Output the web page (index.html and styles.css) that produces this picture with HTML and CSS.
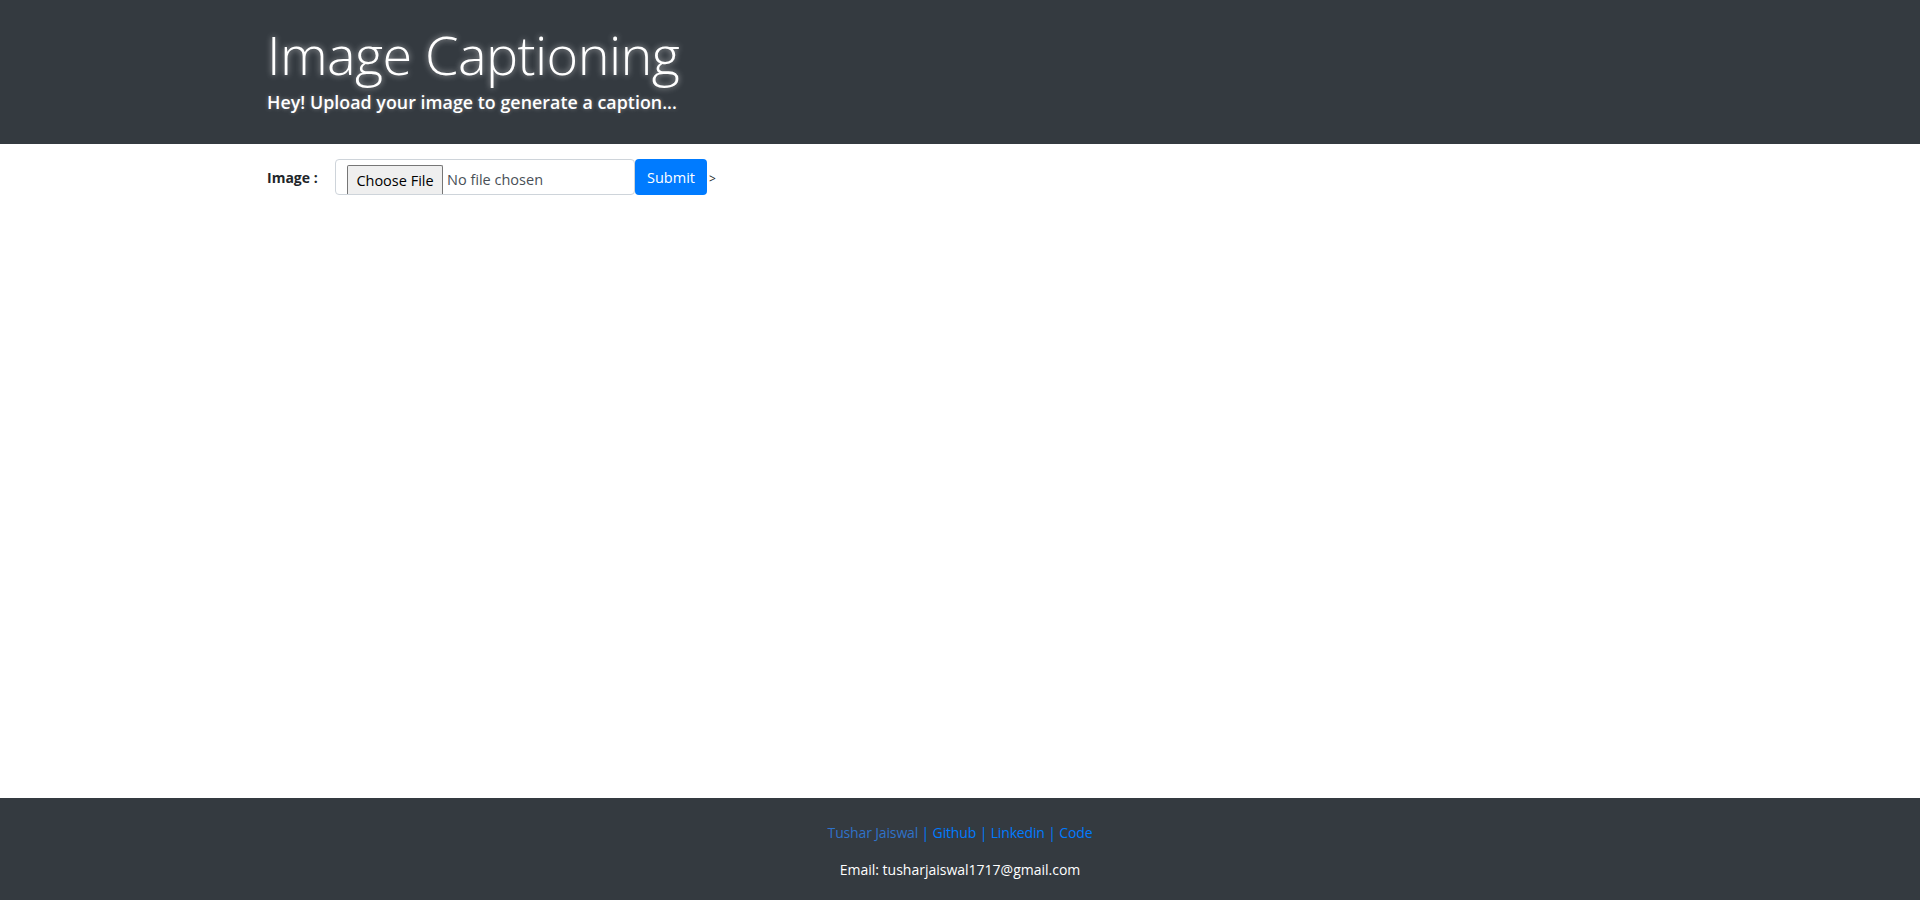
FILE: index.html
```html
<!DOCTYPE html>
<html lang="en">
<head>
<meta charset="utf-8">
<title>Image Captioning</title>
<link rel="stylesheet" href="styles.css">
</head>
<body>
<div class="page">
  <header class="masthead">
    <h1 class="title">Image Captioning</h1>
    <p class="subtitle">Hey! Upload your image to generate a caption...</p>
  </header>
  <main class="content">
    <form class="upload-form">
      <label class="field-label">Image :</label>
      <div class="file-box">
        <span class="file-btn">Choose File</span>
        <span class="file-name">No file chosen</span>
      </div>
      <button type="button" class="submit-btn">Submit</button>
      <span class="gt">&gt;</span>
    </form>
  </main>
  <footer class="site-footer">
    <p class="links"><a class="author">Tushar Jaiswal</a> | <a>Github</a> | <a>Linkedin</a> | <a>Code</a></p>
    <p class="email">Email: tusharjaiswal1717@gmail.com</p>
  </footer>
</div>
</body>
</html>
```
FILE: styles.css
```css
html, body {
  margin: 0;
  padding: 0;
  height: 100%;
}
body {
  font-family: "Open Sans", "Noto Sans", sans-serif;
  color: #212529;
  background: #fff;
}
.page {
  display: flex;
  flex-direction: column;
  height: 900px;
}
.masthead {
  background: #343a40;
  height: 144px;
  box-sizing: border-box;
  padding: 22px 0 0 267px;
  color: #fff;
}
.title {
  margin: 0;
  font-size: 54px;
  font-weight: 300;
  line-height: 1.2;
  letter-spacing: -0.6px;
  text-shadow: 0 0 6px rgba(255,255,255,0.6);
}
.subtitle {
  margin: 5px 0 0;
  font-size: 17.8px;
  font-weight: 600;
  line-height: 1.2;
  letter-spacing: 0.05px;
  text-shadow: 0 0 4px rgba(255,255,255,0.35);
}
.content {
  flex: 1;
  padding: 15px 0 0 267px;
}
.upload-form {
  display: flex;
  align-items: center;
}
.field-label {
  font-size: 14px;
  font-weight: 700;
  width: 68px;
}
.file-box {
  display: flex;
  align-items: flex-end;
  width: 300px;
  height: 36px;
  box-sizing: border-box;
  border: 1px solid #ced4da;
  border-radius: 4px;
  padding-left: 11px;
  overflow: hidden;
}
.file-btn {
  box-sizing: border-box;
  height: 29px;
  width: 96px;
  text-align: center;
  border: 1px solid #767676;
  border-bottom: none;
  border-radius: 2px 2px 0 0;
  background: #efefef;
  font-size: 14.5px;
  line-height: 29px;
  color: #000;
}
.file-name {
  font-size: 14.5px;
  line-height: 28px;
  color: #495057;
  padding-left: 4px;
}
.submit-btn {
  height: 36px;
  width: 72px;
  border: none;
  border-radius: 4px;
  background: #007bff;
  color: #fff;
  font-family: inherit;
  font-size: 14.5px;
  padding: 0;
}
.gt {
  font-size: 12px;
  margin-left: 2px;
  margin-top: 2px;
}
.site-footer {
  background: #343a40;
  height: 102px;
  box-sizing: border-box;
  padding-top: 24px;
  text-align: center;
  font-size: 14px;
}
.site-footer p {
  margin: 0;
}
.links {
  color: #007bff;
  line-height: 21px;
  letter-spacing: -0.15px;
}
.links a {
  color: #007bff;
}
.links .author {
  color: #2f72c9;
}
.email {
  color: #fff;
  margin-top: 16px !important;
  line-height: 21px;
}
```
